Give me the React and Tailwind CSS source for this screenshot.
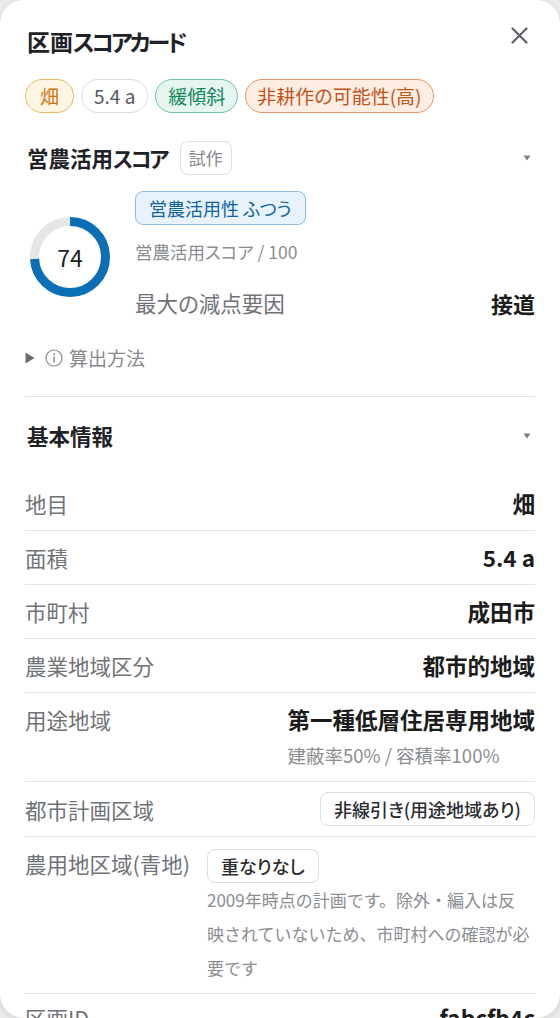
import React from "react";

const FONT = {
  fontFamily: '"Noto Sans CJK JP", "Noto Sans", sans-serif',
};

function Caret() {
  return (
    <svg width="8" height="6" viewBox="0 0 8 6" className="shrink-0">
      <path d="M0.5 0.5 L7.5 0.5 L4 5.5 Z" fill="#7a7d82" />
    </svg>
  );
}

function Donut({ value }) {
  const r = 35.5;
  const c = 2 * Math.PI * r;
  return (
    <div className="relative w-[80px] h-[80px] shrink-0">
      <svg width="80" height="80" viewBox="0 0 80 80" className="-rotate-90">
        <circle cx="40" cy="40" r={r} fill="none" stroke="#e6e6e4" strokeWidth="9" />
        <circle
          cx="40"
          cy="40"
          r={r}
          fill="none"
          stroke="#0a6fb4"
          strokeWidth="9"
          strokeDasharray={`${(c * value) / 100} ${c}`}
        />
      </svg>
      <div className="absolute inset-0 flex items-center justify-center text-[23px] text-[#1f2226]">
        {value}
      </div>
    </div>
  );
}

function Row({ label, children, className = "" }) {
  return (
    <div className={`flex justify-between items-start border-b border-[#e4e4e4] ${className || "py-3"}`}>
      <div className="text-[21.5px] leading-[29px] text-[#707378]">{label}</div>
      <div className="text-right">{children}</div>
    </div>
  );
}

const VAL = "text-[22.5px] leading-[29px] font-bold text-[#1c1c1c]";

export default function App() {
  return (
    <div
      className="w-[560px] h-[1018px] bg-[#ececec] [font-feature-settings:'palt']"
      style={FONT}
    >
      <div className="h-full bg-white rounded-[24px] overflow-hidden shadow-[0_2px_10px_rgba(0,0,0,0.12)] px-[25px] pt-[25px]">
        {/* header */}
        <div className="flex items-start justify-between">
          <h1 className="text-[23px] leading-[32px] font-semibold text-[#1f2226] pl-[2px]">
            区画<span className="tracking-[-3px]">スコアカード</span>
          </h1>
          <button className="-mt-[2px] mr-[3px] p-1">
            <svg width="17" height="17" viewBox="0 0 17 17">
              <path d="M1.5 1.5 L15.5 15.5 M15.5 1.5 L1.5 15.5" stroke="#5f6368" strokeWidth="2.2" strokeLinecap="round" />
            </svg>
          </button>
        </div>

        {/* tags */}
        <div className="flex items-center gap-[7px] mt-[22px] text-[19px] leading-[26px]">
          <span className="rounded-full border border-[#f0b862] bg-[#fff5e3] text-[#cd7410] px-[14px] py-[3px]">畑</span>
          <span className="rounded-full border border-[#dcdcdc] bg-white text-[#55595f] px-[12px] py-[3px]">5.4 a</span>
          <span className="rounded-full border border-[#6dc8a4] bg-[#e6f6ef] text-[#148a5c] px-[12px] py-[3px]">緩傾斜</span>
          <span className="rounded-full border border-[#e9956a] bg-[#fdede3] text-[#c4531a] px-[11px] py-[3px]">非耕作の可能性(高)</span>
        </div>

        {/* score section */}
        <div className="flex items-center justify-between mt-[28px]">
          <div className="flex items-center gap-[13px]">
            <h2 className="text-[21.5px] leading-[30px] font-semibold text-[#1f2226] pl-[2px]">
              営農活用<span className="tracking-[-2.5px]">スコア</span>
            </h2>
            <span className="border border-[#dedede] rounded-lg text-[17px] leading-[24px] px-[8px] py-[4px] text-[#85888c]">試作</span>
          </div>
          <div className="mr-[4px]">
            <Caret />
          </div>
        </div>

        <div className="flex mt-[16px]">
          <div className="ml-[5px] mt-[26px]">
            <Donut value={74} />
          </div>
          <div className="flex-1 ml-[25px]">
            <span className="inline-block border border-[#8cbfe3] bg-[#e7f2fb] text-[#0d63a6] rounded-lg text-[18px] leading-[24px] px-[13px] py-[4px]">
              営農活用性 ふつう
            </span>
            <div className="mt-[15px] text-[17.5px] leading-[24px] text-[#8a8d91]">営農活用スコア / 100</div>
            <div className="mt-[24px] flex items-center justify-between">
              <span className="text-[21.5px] leading-[30px] text-[#707378]">最大の減点要因</span>
              <span className="text-[22px] leading-[30px] font-bold text-[#1c1c1c]">接道</span>
            </div>
          </div>
        </div>

        <div className="mt-[28px] flex items-center gap-[10px] text-[19px] leading-[24px] text-[#85888c]">
          <svg width="10" height="12" viewBox="0 0 10 12">
            <path d="M0.5 0.5 L9.5 6 L0.5 11.5 Z" fill="#6a6d72" />
          </svg>
          <span className="flex items-center gap-[6px]">
            <svg width="18" height="18" viewBox="0 0 18 18">
              <circle cx="9" cy="9" r="8" fill="none" stroke="#85888c" strokeWidth="1.2" />
              <rect x="8.3" y="7.5" width="1.4" height="6" fill="#85888c" />
              <circle cx="9" cy="5.2" r="0.9" fill="#85888c" />
            </svg>
            算出方法
          </span>
        </div>

        <div className="mt-[26px] border-t border-[#e2e2e2]" />

        {/* basic info */}
        <div className="flex items-center justify-between mt-[24px]">
          <h2 className="text-[21.5px] leading-[30px] font-semibold text-[#1f2226] pl-[2px]">基本情報</h2>
          <div className="mr-[4px]">
            <Caret />
          </div>
        </div>

        <div className="mt-[26px]">
          <Row label="地目">
            <span className={VAL}>畑</span>
          </Row>
          <Row label="面積">
            <span className={VAL}>5.4 a</span>
          </Row>
          <Row label="市町村">
            <span className={VAL}>成田市</span>
          </Row>
          <Row label="農業地域区分">
            <span className={VAL}>都市的地域</span>
          </Row>
          <Row label="用途地域" className="pt-3 pb-[13px]">
            <div className={VAL}>第一種低層住居専用地域</div>
            <div className="text-left text-[18.5px] leading-[26px] text-[#8a8d91] mt-[8px] [font-feature-settings:normal]">建蔽率50% / 容積率100%</div>
          </Row>
          <div className="flex justify-between items-center border-b border-[#e4e4e4] py-[10px]">
            <div className="text-[21.5px] leading-[33px] text-[#707378]">都市計画区域</div>
            <span className="border border-[#dcdcdc] rounded-lg text-[18px] leading-[24px] px-[13px] py-[4px] text-[#2b2d30] font-medium">
              非線引き(用途地域あり)
            </span>
          </div>
          <div className="flex items-start border-b border-[#e4e4e4] pt-[12px] pb-[8px]">
            <div className="w-[182px] shrink-0 text-[21.5px] leading-[30px] text-[#707378]">農用地区域(青地)</div>
            <div className="flex-1">
              <span className="inline-block border border-[#dcdcdc] rounded-lg text-[18px] leading-[24px] px-[13px] py-[4px] text-[#2b2d30] font-medium">
                重なりなし
              </span>
              <div className="text-[17px] leading-[34px] text-[#8a8d91] whitespace-nowrap [font-feature-settings:normal]">
                <div>2009年時点の計画です。除外・編入は反</div>
                <div>映されていないため、市町村への確認が必</div>
                <div>要です</div>
              </div>
            </div>
          </div>
          <Row label="区画ID" className="py-[9px]">
            <span className={VAL}>fabcfb4c</span>
          </Row>
        </div>
      </div>
    </div>
  );
}
